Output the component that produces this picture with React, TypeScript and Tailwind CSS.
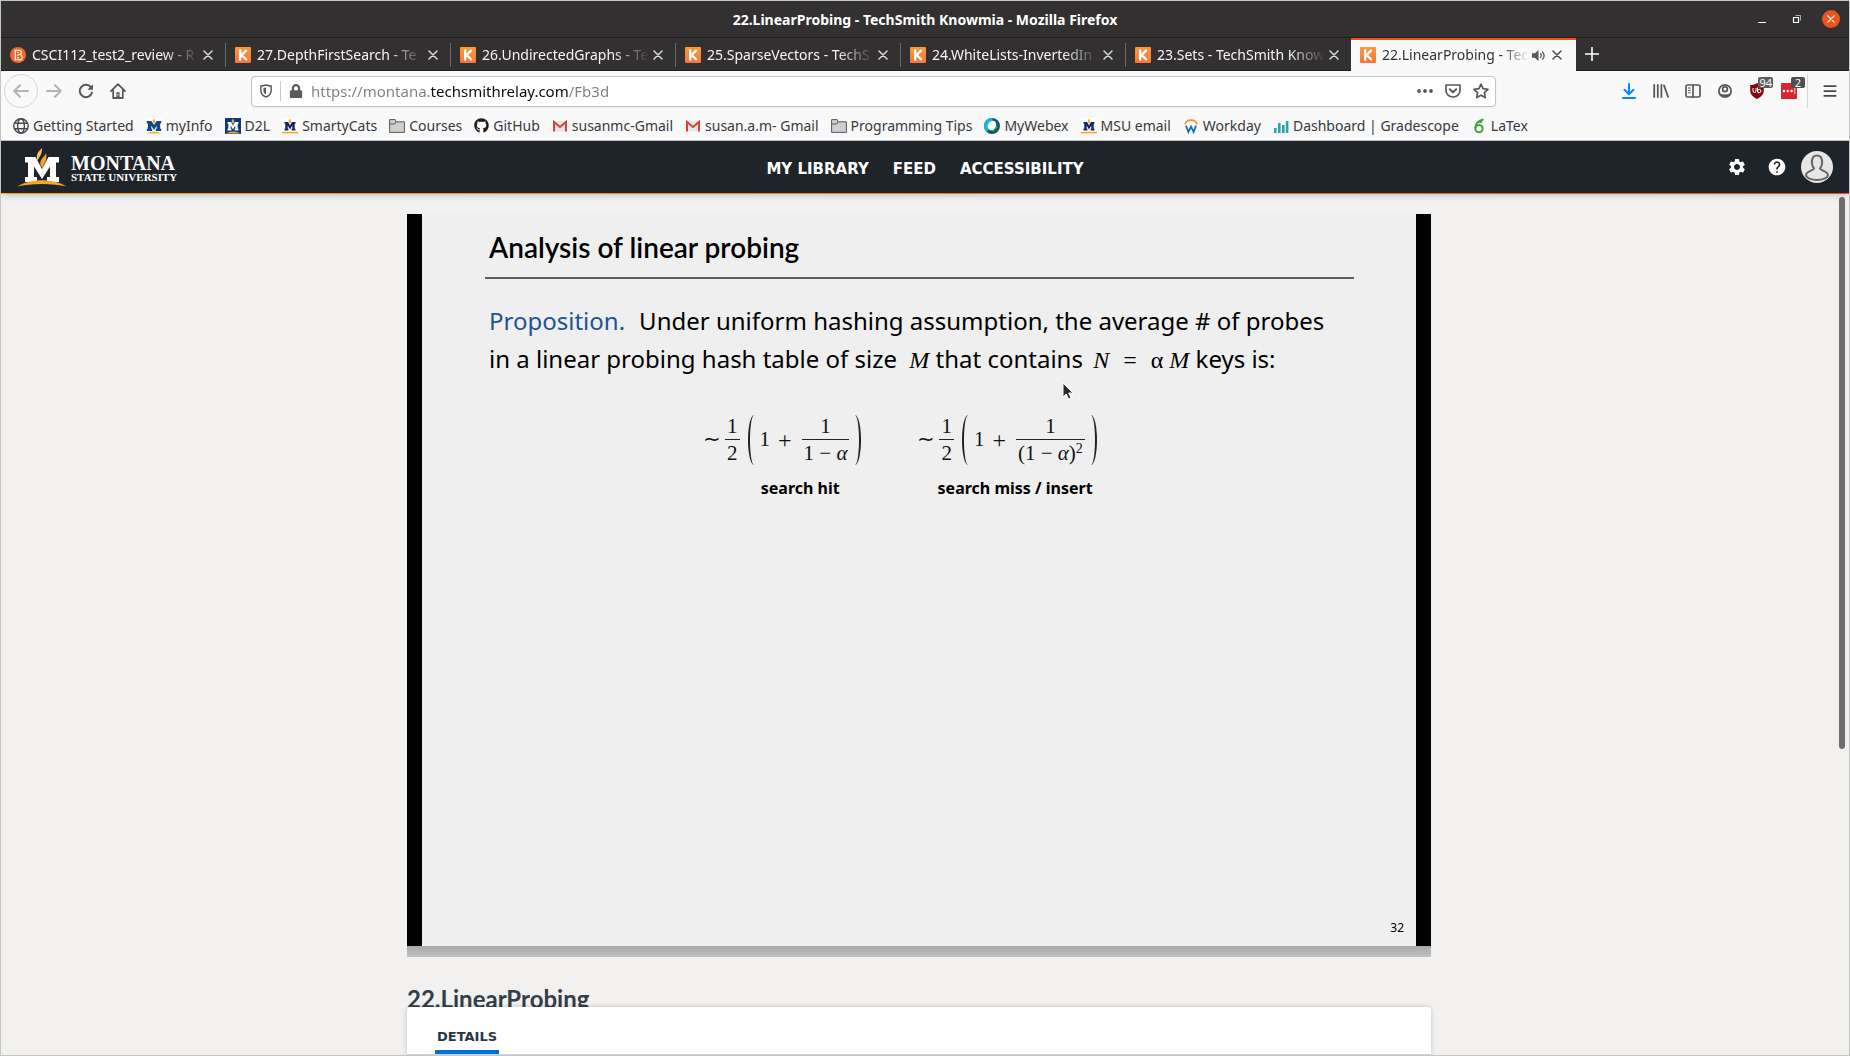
import React from "react";
import { FaGithub, FaLock } from "react-icons/fa";
import { MdHelp, MdSettings } from "react-icons/md";

function KIcon() {
  return (
    <span className="flex size-4 shrink-0 items-center justify-center rounded-[1px] bg-linear-to-b from-[#fa9a3c] to-[#f4763b]">
      <svg viewBox="0 0 16 16" className="size-4" fill="none" stroke="#fff" strokeWidth="2.2" strokeLinecap="round">
        <path d="M5.2 3.2v9.6M11 3.6 6.6 8l4.6 4.4" />
      </svg>
    </span>
  );
}

function BIcon() {
  return (
    <svg viewBox="0 0 16 16" className="size-4 shrink-0">
      <circle cx="8" cy="8" r="8" fill="#ea6a2c" />
      <path d="M5.2 3.2h3.800a2.300 2.300 0 0 1 1.200 4.300 2.600 2.600 0 0 1-1.200 5.300H5.200zM7 5.300h1.800M7 8h2M7 10.600h2" fill="none" stroke="#fff" strokeWidth="1.1" />
    </svg>
  );
}

function CloseIcon({ className }: { className?: string }) {
  return (
    <svg viewBox="0 0 10 10" className={className ?? "size-2.5"} stroke="currentColor" strokeWidth="1.5" strokeLinecap="round">
      <path d="M1 1l8 8M9 1 1 9" />
    </svg>
  );
}

function MLogo({ kind }: { kind: "white" | "navy" | "flat" }) {
  const bg = kind === "navy" ? "#0a3a78" : "#ffffff";
  const fg = kind === "navy" ? "#ffffff" : kind === "flat" ? "#14206b" : "#0f4a86";
  return (
    <svg viewBox="0 0 16 16" className="size-4 shrink-0">
      <rect width="16" height="16" fill={bg} />
      {kind === "white" ? (
        <path d="M.8 3h4.600L8 7l2.600-4h4.600v2.400h-1v5.400h1V13H9.800v-2.200h.9V7.800L8 12 5.300 7.800v3h.9V13H.8v-2.200h1V5.400h-1z" fill={fg} />
      ) : (
        <path d="M2.5 4h3.6L8 7.4 9.9 4h3.6v1.8h-.8v5h.8v1.7H9.6v-1.7h.7V7.6L8 11.4 5.7 7.6v3.2h.7v1.7H2.5v-1.7h.8v-5h-.8z" fill={fg} />
      )}
      <path d="M8 .6 6.4 3.2 8 6.2l1.4-3z" fill="#f2a93b" />
      {kind === "flat" ? (
        <path d="M0 13.800h16v1.6H0z" fill="#f0a81c" />
      ) : (
        <path d="M.5 15.4Q8 11.6 15.5 15.4z" fill="#f2a93b" />
      )}
    </svg>
  );
}

function GlobeIcon() {
  return (
    <svg viewBox="0 0 16 16" className="size-4 shrink-0" fill="none" stroke="#4a4a4d" strokeWidth="1.4">
      <circle cx="8" cy="8" r="7.2" />
      <ellipse cx="8" cy="8" rx="3.4" ry="7.2" />
      <path d="M1.6 5.2h12.8M1.6 10.8h12.8" />
    </svg>
  );
}

function FolderIcon() {
  return (
    <svg viewBox="0 0 16 16" className="size-4 shrink-0" fill="#cfcfcf" stroke="#59595c" strokeWidth="1">
      <path d="M.6 14.4V1.6h5.6l1 2.2h8.2v10.6z" />
      <path d="M.6 6h5.2l1.2-2.2" fill="none" />
    </svg>
  );
}

function GmailIcon() {
  return (
    <svg viewBox="0 0 16 16" className="size-4 shrink-0">
      <path d="M1 3h14v10.4H1z" fill="#e8e6e6" />
      <path d="M2 13.4V4L8 9l6-5v9.400" fill="none" stroke="#d0443b" strokeWidth="2" />
    </svg>
  );
}

function WebexIcon() {
  return (
    <svg viewBox="0 0 16 16" className="size-4 shrink-0">
      <circle cx="8" cy="8" r="8" fill="#075a70" />
      <path d="M8 0a8 8 0 0 0-5 14.2L9 3z" fill="#19b8d6" />
      <path d="M5 12 12 6l1 3.500-4 4z" fill="#57b947" />
      <ellipse cx="7.600" cy="7.600" rx="3.900" ry="5" fill="#fff" transform="rotate(35 8 8)" />
    </svg>
  );
}

function WorkdayIcon() {
  return (
    <svg viewBox="0 0 16 16" className="size-4 shrink-0" fill="none">
      <path d="M2 6.2a6.2 5.4 0 0 1 12 0" stroke="#f0952f" strokeWidth="1.7" />
      <path d="M3 7.6 5.4 14 8 8.6l2.6 5.4L13 7.6" stroke="#1a6fb0" strokeWidth="1.8" />
    </svg>
  );
}

function BarsIcon() {
  return (
    <svg viewBox="0 0 16 16" className="size-4 shrink-0" fill="#2aa5a5">
      <path d="M1 10h2.600v5H1zM5 5h2.600v10H5zM9 7h2.600v8H9zM12.800 3h2.600v12h-2.600z" />
    </svg>
  );
}

function LeafIcon() {
  return (
    <svg viewBox="0 0 16 16" className="size-4 shrink-0" fill="none" stroke="#47a141" strokeWidth="2">
      <circle cx="8" cy="10.6" r="3.7" />
      <path d="M4.3 10.5C4.2 6 7 2.6 12.6 1.4M6.8 4.4l4.4-.6" strokeWidth="1.8" />
    </svg>
  );
}

const tabs = [
  { title: "CSCI112_test2_review - R", icon: <BIcon /> },
  { title: "27.DepthFirstSearch - Te", icon: <KIcon /> },
  { title: "26.UndirectedGraphs - Te", icon: <KIcon /> },
  { title: "25.SparseVectors - TechS", icon: <KIcon /> },
  { title: "24.WhiteLists-InvertedIn", icon: <KIcon /> },
  { title: "23.Sets - TechSmith Know", icon: <KIcon /> },
];

const bookmarks = [
  { label: "Getting Started", icon: <GlobeIcon /> },
  { label: "myInfo", icon: <MLogo kind="white" /> },
  { label: "D2L", icon: <MLogo kind="navy" /> },
  { label: "SmartyCats", icon: <MLogo kind="flat" /> },
  { label: "Courses", icon: <FolderIcon /> },
  { label: "GitHub", icon: <FaGithub className="size-[15px] shrink-0 text-[#1b1f23]" /> },
  { label: "susanmc-Gmail", icon: <GmailIcon /> },
  { label: "susan.a.m- Gmail", icon: <GmailIcon /> },
  { label: "Programming Tips", icon: <FolderIcon /> },
  { label: "MyWebex", icon: <WebexIcon /> },
  { label: "MSU email", icon: <MLogo kind="flat" /> },
  { label: "Workday", icon: <WorkdayIcon /> },
  { label: "Dashboard | Gradescope", icon: <BarsIcon /> },
  { label: "LaTex", icon: <LeafIcon /> },
];

function TitleBar() {
  return (
    <div className="grid h-[37px] shrink-0 grid-cols-[1fr_auto_1fr] items-center border-b border-[#1f1d1e] bg-[#323031]">
      <span />
      <h1 className="pt-0.5 text-sm font-bold text-white">22.LinearProbing - TechSmith Knowmia - Mozilla Firefox</h1>
      <div className="flex items-center justify-end gap-5 pr-[9px] text-white">
        <button aria-label="Minimize" className="mr-1 flex h-4 w-2.5 items-end pb-1">
          <span className="h-px w-2 bg-white" />
        </button>
        <button aria-label="Restore">
          <svg viewBox="0 0 10 10" className="size-2.5" fill="none" stroke="#fff">
            <path d="M1.5 3.5h5v5h-5z" strokeWidth="1.2" />
            <path d="M3.5 1.5h5v5" opacity=".6" />
          </svg>
        </button>
        <button aria-label="Close" className="flex size-[18px] items-center justify-center rounded-full bg-[#e95420]">
          <CloseIcon className="size-2" />
        </button>
      </div>
    </div>
  );
}

function TabStrip() {
  return (
    <div className="flex h-[33px] shrink-0 bg-[#323031]">
      {tabs.map((t, i) => (
        <div key={t.title} className="flex w-[225px] items-center border-b border-[#1f1d1e] pt-0.5">
          <div className="flex min-w-0 flex-1 items-center pr-3 pl-[9px]">
            {t.icon}
            <button className="ml-1.5 min-w-0 flex-1 text-left text-sm whitespace-nowrap text-[#f6f5f4] [mask-image:linear-gradient(to_left,transparent,black_36px)]">
              {t.title}
            </button>
            <button aria-label={"Close " + t.title} className="ml-1 text-[#dcdcdc]">
              <CloseIcon />
            </button>
          </div>
          {i < tabs.length - 1 && <span className="h-6 w-px bg-[#6b696a]" />}
        </div>
      ))}
      <div className="flex w-[225px] items-center border-t-2 border-[#e95420] bg-[#f9f9fa] pr-3.5 pb-px pl-[9px]">
        <KIcon />
        <button className="ml-1.5 min-w-0 flex-1 text-left text-sm whitespace-nowrap text-[#323234] [mask-image:linear-gradient(to_left,transparent,black_28px)]">
          22.LinearProbing - Tec
        </button>
        <button aria-label="Mute tab" className="ml-0.5">
          <svg viewBox="0 0 16 16" className="size-[15px] text-[#59595c]">
            <path d="M1 5.5h3L8 2v12l-4-3.500H1z" fill="currentColor" />
            <path d="M10 5.500q2 2.500 0 5M12 3.500q4 4.500 0 9" fill="none" stroke="currentColor" strokeWidth="1.300" />
          </svg>
        </button>
        <button aria-label="Close tab" className="ml-1.5 text-[#4a4a4d]">
          <CloseIcon />
        </button>
      </div>
      <div className="flex flex-1 items-center border-b border-[#1f1d1e]">
        <button aria-label="New tab" className="ml-[9px] text-white">
          <svg viewBox="0 0 14 14" className="size-3.5" stroke="currentColor" strokeWidth="1.6">
            <path d="M7 0v14M0 7h14" />
          </svg>
        </button>
      </div>
    </div>
  );
}

function ToolButton({ label, children }: { label: string; children: React.ReactNode }) {
  return (
    <button aria-label={label} className="relative flex h-8 w-8 shrink-0 items-center justify-center text-[#59595c]">
      {children}
    </button>
  );
}

function NavBar() {
  return (
    <div className="flex h-10 shrink-0 items-center bg-[#f9f9fa] pl-[3px]">
      <button aria-label="Back" disabled className="flex size-[34px] shrink-0 items-center justify-center rounded-full border border-[#d4d4d5] text-[#b4b4b5]">
        <svg viewBox="0 0 16 16" className="size-4" fill="none" stroke="currentColor" strokeWidth="2" strokeLinecap="round" strokeLinejoin="round">
          <path d="M15 8H1.500M7 2.200 1.200 8 7 13.800" />
        </svg>
      </button>
      <ToolButton label="Forward">
        <svg viewBox="0 0 16 16" className="size-4 text-[#b4b4b5]" fill="none" stroke="currentColor" strokeWidth="2" strokeLinecap="round" strokeLinejoin="round">
          <path d="M1 8h13.500M9 2.200 14.800 8 9 13.800" />
        </svg>
      </ToolButton>
      <ToolButton label="Reload">
        <svg viewBox="0 0 16 16" className="size-4" fill="none" stroke="currentColor" strokeWidth="2" strokeLinecap="round">
          <path d="M13.200 4.600A6.200 6.200 0 1 0 14 9.500" />
          <path d="M15 1.200v5.600H9.400z" fill="currentColor" stroke="none" />
        </svg>
      </ToolButton>
      <ToolButton label="Home">
        <svg viewBox="0 0 16 16" className="size-4" fill="none" stroke="currentColor" strokeWidth="1.800" strokeLinejoin="round" strokeLinecap="round">
          <path d="M1 8.200 8 1.200l7 7M3.200 7v8h9.600V7" />
          <path d="M6.400 15V9.200h3.200V15z" fill="currentColor" stroke="none" />
          <path d="M8 11.600v.4" stroke="#fff" strokeWidth="1.200" />
        </svg>
      </ToolButton>
      <div className="w-[117px] shrink-0" />
      <div className="flex h-[31px] min-w-0 flex-1 items-center rounded-sm border border-[#c4c4c4] bg-white pl-2 text-[#59595c] shadow-xs">
        <button aria-label="Tracking protection">
          <svg viewBox="0 0 14 16" className="h-3.5 w-3" fill="none" stroke="currentColor" strokeWidth="1.700">
            <path d="M7 1 13 2.400V7c0 4-2.500 6.600-6 8-3.500-1.400-6-4-6-8V2.400z" />
            <path d="M7 4v8c-2-1.200-3-3-3-5V4.600z" fill="currentColor" stroke="none" />
          </svg>
        </button>
        <span className="mx-2 h-5 w-px bg-[#c9c9ca]" />
        <FaLock className="size-3.5 shrink-0" />
        <input
          aria-label="Address"
          defaultValue="https://montana.techsmithrelay.com/Fb3d"
          className="ml-2 min-w-0 flex-1 bg-[linear-gradient(90deg,#7f7f80_0_119px,#0c0c0d_119px_257px,#7f7f80_257px)] bg-clip-text text-[15px] text-transparent outline-none"
        />
        <div className="flex items-center gap-3 pr-1.5">
          <button aria-label="Page actions">
            <svg viewBox="0 0 16 16" className="size-4" fill="currentColor">
              <circle cx="2" cy="8" r="1.900" />
              <circle cx="8" cy="8" r="1.900" />
              <circle cx="14" cy="8" r="1.900" />
            </svg>
          </button>
          <button aria-label="Save to Pocket">
            <svg viewBox="0 0 16 16" className="size-4" fill="none" stroke="currentColor" strokeWidth="1.700" strokeLinecap="round" strokeLinejoin="round">
              <path d="M1 2h14v5.500a7 6.500 0 0 1-14 0z" />
              <path d="M4.800 6.200 8 9.200l3.200-3" strokeWidth="2" />
            </svg>
          </button>
          <button aria-label="Bookmark this page">
            <svg viewBox="0 0 16 16" className="size-4" fill="none" stroke="currentColor" strokeWidth="1.700" strokeLinejoin="round">
              <path d="m8 1.200 2.100 4.500 4.900.6-3.600 3.400.9 4.900L8 12.200l-4.300 2.400.9-4.900L1 6.300l4.900-.6z" />
            </svg>
          </button>
        </div>
      </div>
      <div className="w-[117px] shrink-0" />
      <ToolButton label="Downloads">
        <svg viewBox="0 0 16 16" className="size-4 text-[#0a84ff]" fill="none" stroke="currentColor" strokeWidth="2" strokeLinecap="round" strokeLinejoin="round">
          <path d="M8 1v10M3.500 6.800 8 11.200l4.500-4.400M2 15h12" />
        </svg>
      </ToolButton>
      <ToolButton label="Library">
        <svg viewBox="0 0 16 16" className="size-4" stroke="currentColor" strokeWidth="1.800" strokeLinecap="round">
          <path d="M1.200 2v12M4.800 2v12M8.400 2v12M11 2.400l4 11.400" />
        </svg>
      </ToolButton>
      <ToolButton label="Sidebars">
        <svg viewBox="0 0 16 16" className="size-4" fill="none" stroke="currentColor" strokeWidth="1.700" strokeLinecap="round">
          <rect x="1" y="2" width="14" height="12" rx="1.500" />
          <path d="M8 2v12" />
          <path d="M3.400 5h2M3.400 7.400h2M3.400 9.800h2" strokeWidth="1" />
        </svg>
      </ToolButton>
      <ToolButton label="Account">
        <svg viewBox="0 0 16 16" className="size-3.5" fill="none" stroke="currentColor" strokeWidth="2">
          <circle cx="8" cy="8" r="7" />
          <circle cx="8" cy="6" r="2.700" />
          <path d="M2.600 11.200Q8 13 13.400 11.200 11.500 15 8 15t-5.400-3.800z" fill="currentColor" stroke="none" />
        </svg>
      </ToolButton>
      <ToolButton label="uBlock Origin">
        <svg viewBox="0 0 16 16" className="size-4">
          <path d="M8 0c2 1.500 4 2 6.800 2v5.500c0 4-3 6.500-6.800 8.500-3.800-2-6.800-4.500-6.800-8.500V2C4 2 6 1.500 8 0z" fill="#800610" />
          <path d="M4 5v3a1.500 1.500 0 0 0 3 0V5m1.500-.5v5M8.600 8a1.700 1.700 0 1 0 3.400 0 1.700 1.700 0 0 0-3.400 0z" fill="none" stroke="#fff" strokeWidth="1" />
        </svg>
        <span className="absolute top-0.5 right-0 rounded-xs bg-[#5d5d5d] px-px text-[11px] leading-[11px] text-white">94</span>
      </ToolButton>
      <ToolButton label="LastPass">
        <svg viewBox="0 0 16 16" className="size-4">
          <rect width="16" height="16" rx="1" fill="#d8262f" />
          <path d="M13.800 5v6" stroke="#fff" strokeWidth=".8" />
          <g fill="#fff">
            <circle cx="3" cy="8" r="1.200" />
            <circle cx="6.800" cy="8" r="1.200" />
            <circle cx="10.600" cy="8" r="1.200" />
          </g>
        </svg>
        <span className="absolute top-0.5 right-0 w-3.5 rounded-xs bg-[#4f4f50] text-center text-[11px] leading-[11px] text-white">2</span>
      </ToolButton>
      <span className="ml-0.5 h-[34px] w-px bg-[#d6d6d7]" />
      <button aria-label="Menu" className="flex w-[41px] shrink-0 items-center justify-center pl-0.5 text-[#4a4a4d]">
        <svg viewBox="0 0 16 16" className="size-3.5" stroke="currentColor" strokeWidth="2" strokeLinecap="round">
          <path d="M1.500 2.500h13M1.500 8h13M1.500 13.500h13" />
        </svg>
      </button>
    </div>
  );
}

function BookmarkBar() {
  return (
    <nav aria-label="Bookmarks" className="flex h-[30px] shrink-0 items-center gap-3 overflow-hidden border-b border-[#bfc0bf] bg-[#f9f9fa] pl-3">
      {bookmarks.map((b) => (
        <a key={b.label} href="#" className="flex items-center gap-1 text-sm whitespace-nowrap text-[#38383a]">
          {b.icon}
          {b.label}
        </a>
      ))}
    </nav>
  );
}

function SiteHeader() {
  return (
    <header className="relative z-10 shrink-0 shadow-md">
      <div className="grid h-[52px] grid-cols-[1fr_auto_1fr] items-center bg-[#1f242b]">
        <a href="#" aria-label="Montana State University" className="flex items-center gap-1 pl-4">
          <svg viewBox="0 0 50 40" className="h-10 w-[50px]">
            <path d="M8 10h10.500L25 22l6.500-12H42v5.500h-3V30h3v5H30v-5h3V19.500L25 32l-8-12.500V30h3v5H8v-5h3V15.500H8z" fill="#fff" />
            <path d="M25 1c-5 5-6 7-4.500 13C22 10 25 8 25 1z" fill="#fbc468" />
            <path d="M29 6c-1 4-7 6-5.500 12.500L26 21c0-5 5-6 3-15z" fill="#f7a428" />
            <path d="M0 39.500C14 31 36 31 50 39.500 36 36 14 36 0 39.500z" fill="#f7a428" />
          </svg>
          <span className="flex flex-col pt-0.5 font-['Liberation_Serif',serif] font-bold text-white">
            <span className="text-xl leading-[18px]">MONTANA</span>
            <span className="text-[11px] leading-[11px]">STATE UNIVERSITY</span>
          </span>
        </a>
        <nav aria-label="Site" className="flex gap-6 pt-1 font-['DejaVu_Sans',sans-serif] text-[15px] font-bold text-white">
          <a href="#">MY LIBRARY</a>
          <a href="#">FEED</a>
          <a href="#">ACCESSIBILITY</a>
        </nav>
        <div className="flex items-center justify-end pr-4 text-white">
          <button aria-label="Settings" className="mr-5">
            <MdSettings className="size-5" />
          </button>
          <button aria-label="Help" className="mr-3.5">
            <MdHelp className="size-5" />
          </button>
          <button aria-label="Profile" className="rounded-full bg-[#e6e6e6]">
            <svg viewBox="0 0 32 32" className="size-8" fill="none" stroke="#666" strokeWidth="2">
              <path d="M13 17.500C10 14 9.500 4.500 16 4.500s6 9.500 3 13c0 2 8 2.500 8 6.500 0 3-6 5-11 5S5 27 5 24c0-4 8-4.500 8-6.500z" />
            </svg>
          </button>
        </div>
      </div>
      <div className="h-px bg-linear-to-r from-[#f7a11b] to-[#d9532c]" />
    </header>
  );
}

function Fraction({ top, children }: { top: string; children: React.ReactNode }) {
  return (
    <span className="flex flex-col items-center">
      <span className="leading-[26px]">{top}</span>
      <span className="border-t border-[#222] px-0.5 leading-[26px]">{children}</span>
    </span>
  );
}

function Estimate({ caption, children }: { caption: React.ReactNode; children: React.ReactNode }) {
  return (
    <figure>
      <div className="flex items-center font-['Liberation_Serif',serif] text-[21px] text-[#111]">
        <span className="mr-1">∼</span>
        <Fraction top="1">2</Fraction>
        <span className="ml-2 h-[50px] w-3 rounded-l-[100%] border-l-2 border-[#222]" />
        <span className="mr-2">1</span>
        <span className="mr-2.5 text-2xl">+</span>
        <Fraction top="1">{children}</Fraction>
        <span className="h-[50px] w-3 rounded-r-[100%] border-r-2 border-[#222]" />
      </div>
      <figcaption className="mt-2.5 text-center text-base leading-6 font-bold text-black">{caption}</figcaption>
    </figure>
  );
}

function Slide() {
  return (
    <section aria-label="Lecture video" className="shrink-0">
      <div className="relative flex aspect-[1024/732] justify-between bg-black px-[15px]">
        <div className="flex flex-1 flex-col bg-[#efefef] pt-[15px] text-black">
          <div className="mr-[62px] ml-[63px] border-b-2 border-[#5c5c5c] pb-3">
            <h2 className="pl-1 font-['Lato',sans-serif] text-[28px] leading-9 font-semibold">Analysis of linear probing</h2>
          </div>
          <p className="mt-[23px] ml-[67px] text-2xl leading-[38px] whitespace-nowrap">
            <span className="mr-3.5 text-[#1f5391]">Proposition.</span>
            Under uniform hashing assumption, the average # of probes
            <br />
            in a linear probing hash table of size <i className="ml-1.5 font-['Liberation_Serif',serif]">M</i> that contains{" "}
            <span className="font-['Liberation_Serif',serif]">
              <i className="ml-1">N</i>
              <span className="mx-3.5">=</span>α <i>M</i>
            </span>{" "}
            keys is:
          </p>
          <div className="mt-[34px] flex gap-14 pl-[281px]">
            <Estimate caption={<span className="pl-9">search hit</span>}>
              1 − <i>α</i>
            </Estimate>
            <Estimate caption={<span className="pl-4">search miss / insert</span>}>
              (1 − <i>α</i>)<sup className="text-sm leading-none">2</sup>
            </Estimate>
          </div>
          <span className="mt-auto mr-3 self-end pb-2.5 text-xs leading-4">32</span>
        </div>
        <svg viewBox="0 0 12 18" className="absolute top-[23%] left-[64%] h-[18px] w-3">
          <path d="M1 1v14l3.200-3L6.500 17l2.500-1-2.300-5H11z" fill="#2b2b2b" stroke="#fff" strokeWidth="1" />
        </svg>
      </div>
      <div className="h-[11px] bg-linear-to-b from-[#a9a9a9] to-[#c1c1c1]" />
    </section>
  );
}

export default function App() {
  return (
    <div className="flex h-screen flex-col overflow-hidden border border-[#c4c5c4] font-['Noto_Sans','Open_Sans',sans-serif]">
      <TitleBar />
      <TabStrip />
      <NavBar />
      <BookmarkBar />
      <SiteHeader />
      <div className="flex min-h-0 flex-1 bg-[#f3f1ef]">
        <main className="flex min-w-0 flex-1 flex-col items-center">
          <div className="flex min-h-0 w-full max-w-5xl flex-1 flex-col overflow-hidden pt-5">
            <Slide />
            <h2 className="mt-[26px] shrink-0 font-['Lato',sans-serif] text-2xl leading-8 font-bold text-[#323e48]">22.LinearProbing</h2>
          </div>
          <div className="relative w-full max-w-5xl shrink-0 rounded-t-sm border-b border-[#cfd3dc] bg-white px-7 shadow-[0_0_5px_rgba(0,0,0,0.2)]">
            <button className="mt-5 block border-b-4 border-[#0071ce] px-0.5 pb-1 font-['DejaVu_Sans',sans-serif] text-[13px] leading-[19px] font-bold text-[#263640]">DETAILS</button>
          </div>
        </main>
        <div className="flex w-3 shrink-0 flex-col pt-[3px] pl-0.5">
          <div className="w-1.5 flex-9 rounded-full bg-[#6e6e6e]" />
          <div className="flex-5" />
        </div>
      </div>
    </div>
  );
}
